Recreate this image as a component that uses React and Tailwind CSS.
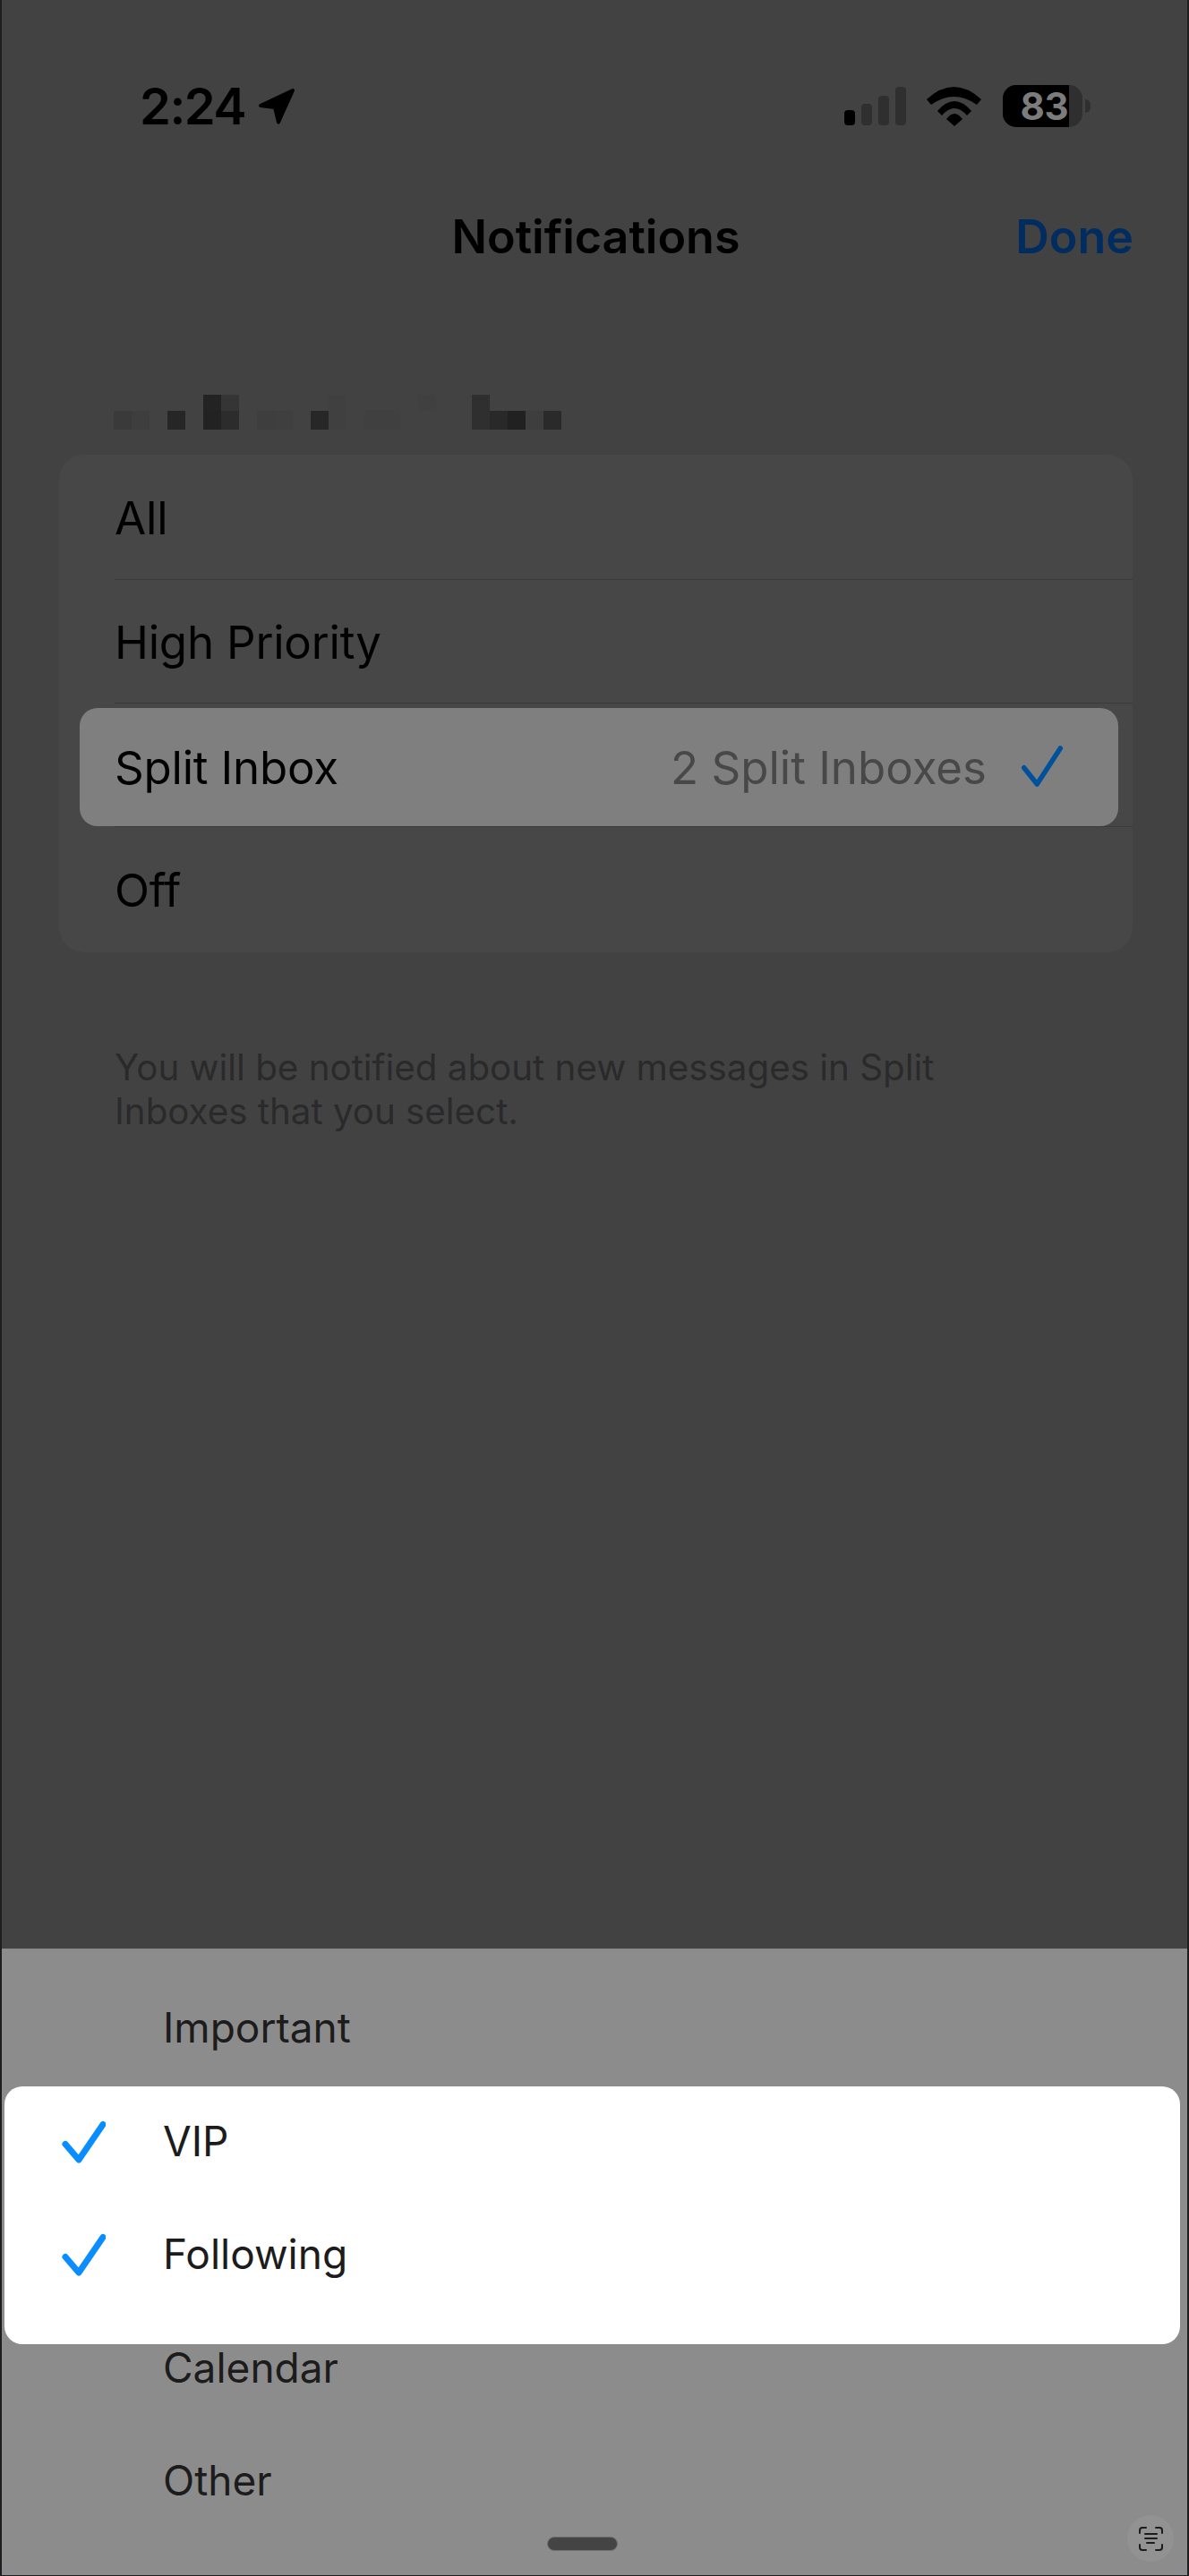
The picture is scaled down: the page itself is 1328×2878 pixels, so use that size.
const font = "font-['Inter','Liberation_Sans',sans-serif]";

// pixelated name above the card: x offset, y row, colour
const blurBlocks = [
  [0, 1, "#3a3a3a"], [20, 1, "#3e3e3e"], [60, 1, "#262626"],
  [100, 0, "#232323"], [100, 1, "#222222"], [120, 0, "#353535"], [120, 1, "#2c2c2c"],
  [160, 1, "#3e3e3e"], [180, 1, "#3f3f3f"], [220, 1, "#272727"],
  [240, 0, "#404040"], [240, 1, "#404040"], [280, 1, "#404040"], [300, 1, "#404040"],
  [340, 0, "#404040"],
  [400, 0, "#2f2f2f"], [400, 1, "#2f2f2f"], [420, 1, "#292929"], [440, 1, "#212121"],
  [460, 1, "#3e3e3e"], [480, 1, "#2a2a2a"],
];

function StatusBar() {
  return (
    <div className="flex h-[47px] items-center justify-between pl-[154px] pr-[108px]">
      <div className="flex items-center gap-[13px]">
        <span className="text-[56px] leading-none font-semibold tracking-[-1.5px] text-black">2:24</span>
        <svg width="44" height="44" viewBox="0 0 44 44">
          <path d="M4 21 L40 4 L24 39.5 L20 23 Z" fill="#000" stroke="#000" strokeWidth="4" strokeLinejoin="round" />
        </svg>
      </div>
      <div className="flex items-center">
        <div className="flex items-end gap-[7px]">
          <div className="h-[17px] w-[12px] rounded-[4px] bg-black" />
          <div className="h-[24px] w-[12px] rounded-[4px] bg-[#2f2f2f]" />
          <div className="h-[33px] w-[12px] rounded-[4px] bg-[#2f2f2f]" />
          <div className="h-[43px] w-[12px] rounded-[4px] bg-[#2f2f2f]" />
        </div>
        <svg className="ml-[23px]" width="61" height="44" viewBox="0 0 61 44">
          <path d="M0 14 Q30.5 -14 61 14 L56 20 Q30.5 2 5 20 Z" fill="#000" />
          <path d="M12 27 Q31 5 50 27 L45 32 Q31 16 17 32 Z" fill="#000" />
          <path d="M22 36 Q31 24 40 36 L31 44 Z" fill="#000" />
        </svg>
        <div className="ml-[24px] flex h-[47px] w-[89px] rounded-[15px] bg-[#2f2f2f]">
          <div className="flex w-[74px] items-center justify-end rounded-l-[15px] bg-black pr-[1px]">
            <span className="text-[42px] leading-none font-bold tracking-[-0.5px] text-[#7c7c7c]">83</span>
          </div>
        </div>
        <div className="ml-[3px] h-[15px] w-[6px] rounded-r-full bg-[#2f2f2f]" />
      </div>
    </div>
  );
}

function MenuRow({ label, className }) {
  return (
    <div className={`flex items-center pt-[2px] pl-[62px] ${className}`}>
      <span className="text-[51px] leading-none tracking-[-0.2px] text-black">{label}</span>
    </div>
  );
}

function ActiveRow() {
  return (
    <div className="mt-[5px] ml-[23px] mr-[16px] flex h-[132px] items-center justify-between rounded-[20px] bg-[#7f7f7f] pl-[39px] pr-[60px]">
      <span className="text-[51px] leading-none tracking-[-0.2px] text-black">Split Inbox</span>
      <div className="flex items-center gap-[37px]">
        <span className="text-[51px] leading-none text-[#484848]">2 Split Inboxes</span>
        <svg width="50" height="50" viewBox="0 0 50 50" fill="none">
          <path d="M4.7 25.7 L19.3 44 L45.3 4" stroke="#00519c" strokeWidth="5.5" strokeLinecap="round" strokeLinejoin="round" />
        </svg>
      </div>
    </div>
  );
}

function SheetRow({ label, checked }) {
  return (
    <div className="relative flex h-[126.5px] items-center">
      <div className="w-[180px] pl-[66px]">
        {checked && (
          <svg width="50" height="50" viewBox="0 0 50 50" fill="none">
            <path d="M5 28.5 L20 46 L47 6.5" stroke="#0a8dff" strokeWidth="7" strokeLinecap="round" strokeLinejoin="round" />
          </svg>
        )}
      </div>
      <span className="text-[46px] leading-none text-[#1c1c1c]">{label}</span>
    </div>
  );
}

export default function App() {
  return (
    <div className={`flex h-[2878px] w-[1328px] flex-col overflow-hidden border-x-2 border-b border-[#1e1e22] bg-[#424243] ${font}`}>
      <div className="flex-1 pt-[95px]">
        <StatusBar />
        <div className="relative mt-[97px] pl-[3px] text-center">
          <span className="text-[52px] leading-[51px] font-semibold text-black">Notifications</span>
          <span className="absolute top-0 right-[60px] text-[52px] leading-[51px] font-semibold text-[#002c5f]">Done</span>
        </div>
        <svg className="mt-[151px] ml-[125px] block" width="500" height="39" viewBox="0 0 500 39">
          {blurBlocks.map(([x, row, color], i) => (
            <rect key={i} x={x} y={row === 0 ? 0 : 18} width="20" height={row === 0 ? 18 : 21} fill={color} />
          ))}
        </svg>
        <div className="mt-[28px] ml-[64px] mr-[61px] h-[556px] rounded-[28px] bg-[#474747]">
          <MenuRow label="All" className="h-[139px]" />
          <div className="ml-[62px] h-px bg-[#3a3a3a]" />
          <MenuRow label="High Priority" className="h-[137px]" />
          <div className="ml-[62px] h-px bg-[#3a3a3a]" />
          <ActiveRow />
          <div className="ml-[62px] h-px bg-[#3a3a3a]" />
          <MenuRow label="Off" className="h-[139px]" />
        </div>
        <p className="mt-[104px] w-[1100px] pl-[126px] text-[40.3px] leading-[49px] text-[#2a2a2b]">
          You will be notified about new messages in Split
          <br />
          Inboxes that you select.
        </p>
      </div>
      <div className="relative h-[700px] bg-[#8c8c8c] pt-[25px]">
        <div className="absolute top-[154px] right-[8px] left-[3px] h-[288px] rounded-[20px] bg-white" />
        <SheetRow label="Important" />
        <SheetRow label="VIP" checked />
        <SheetRow label="Following" checked />
        <SheetRow label="Calendar" />
        <SheetRow label="Other" />
        <div className="absolute bottom-[27px] left-[609px] h-[16px] w-[79px] rounded-full border border-[#6f6f6f] bg-[#444444]" />
        <div className="absolute right-[15px] bottom-[15px] flex h-[52px] w-[52px] items-center justify-center rounded-full bg-[#929292]">
          <svg width="27" height="27" viewBox="0 0 27 27" fill="none" stroke="#1c1c1c" strokeWidth="2" strokeLinecap="round">
            <path d="M1 7 V4 Q1 1 4 1 H8 M19 1 H23 Q26 1 26 4 V7 M1 20 V23 Q1 26 4 26 H8 M26 20 V23 Q26 26 23 26 H19" />
            <path d="M7 8 H20 M7 13 H20 M9 18 H17" />
          </svg>
        </div>
      </div>
    </div>
  );
}
